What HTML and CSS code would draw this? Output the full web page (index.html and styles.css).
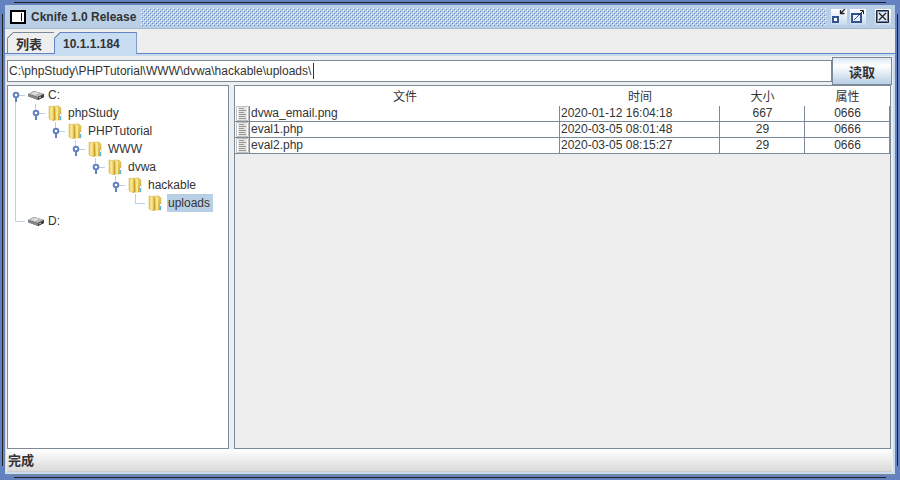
FILE: index.html
```html
<!DOCTYPE html>
<html lang="zh-CN">
<head>
    <meta charset="UTF-8">
    <meta name="viewport" content="width=device-width, initial-scale=1.0">
    <title>Cknife 1.0 Release</title>
    <link rel="stylesheet" href="styles.css">
</head>
<body>
    <!-- Shared icons -->
    <svg class="sprite" aria-hidden="true">
        <defs>
            <linearGradient id="gold" x1="0" x2="1" y1="0" y2="1">
                <stop offset="0" stop-color="#f6e48c"/>
                <stop offset="1" stop-color="#cfa62e"/>
            </linearGradient>
            <linearGradient id="gold-light" x1="0" x2="1">
                <stop offset="0" stop-color="#e2bd48"/>
                <stop offset="0.4" stop-color="#fbeea0"/>
                <stop offset="1" stop-color="#e6c658"/>
            </linearGradient>
        </defs>
        <symbol id="handle-root" viewBox="0 0 20 18">
            <path d="M11 9.500h6" stroke="#b8cfe5"/>
            <path d="M8 11v5" stroke="#6382bf" stroke-width="2"/>
            <circle cx="8" cy="9" r="2.300" fill="#fff" stroke="#6382bf" stroke-width="2"/>
        </symbol>
        <symbol id="handle" viewBox="0 0 20 18">
            <path d="M7.500 0v7M11 9.500h6" stroke="#b8cfe5"/>
            <path d="M8 11v5" stroke="#6382bf" stroke-width="2"/>
            <circle cx="8" cy="9" r="2.300" fill="#fff" stroke="#6382bf" stroke-width="2"/>
        </symbol>
        <symbol id="elbow" viewBox="0 0 20 18">
            <path d="M7.500 0v9.500h9.500" fill="none" stroke="#b8cfe5"/>
        </symbol>
        <symbol id="drive" viewBox="0 0 16 16">
            <path d="M0 7l6-3 10 3v3l-6 3L0 9z" fill="#555"/>
            <path d="M0 7l6-3 10 3-6 3z" fill="#b9b9b9"/>
            <path d="M3 6.500l4-1.500 4 1-4 2z" fill="#e4e4e4"/>
            <path d="M0 7l10 3v3L0 9.500z" fill="#858585"/>
            <path d="M10 10l6-3v3l-6 3z" fill="#3d3d3d"/>
            <path d="M11 11l2-1" stroke="#ddd"/>
        </symbol>
        <symbol id="folder" viewBox="0 0 16 16">
            <path d="M5 1h6l2 2v12H5z" fill="url(#gold)" stroke="#d8b64c" stroke-width="0.500"/>
            <path d="M1 1l5 1v14l-5-2z" fill="url(#gold-light)" stroke="#d3ac3b" stroke-width="0.500"/>
            <path d="M6 3l1-1v13l-1 1z" fill="#c99f2c"/>
            <path d="M8 2h2v13H8z" fill="#f8e68e"/>
            <path d="M12.500 11v4" stroke="#5bb5dd"/>
            <path d="M12.500 9v2" stroke="#fff"/>
        </symbol>
        <symbol id="file" viewBox="0 0 13 15">
            <path d="M0.500 0.500h12v14h-12z" fill="#fff" stroke="#c0c0c0"/>
            <path d="M2 1h9v13H2z" fill="#e6e6e6"/>
            <path d="M3 2.500h5M3 4.500h7M3 6.500h5M3 8.500h7M3 10.500h6M3 12.500h7" stroke="#969696"/>
        </symbol>
    </svg>

    <div class="window">
        <header class="titlebar">
            <svg class="app-icon" viewBox="0 0 16 14">
                <path d="M1 1h14v12H1z" fill="#fff" stroke="#000" stroke-width="2"/>
                <path d="M11.500 3v8" stroke="#000"/>
            </svg>
            <h1 class="title">Cknife 1.0 Release</h1>
            <div class="grip"></div>
            <div class="window-buttons">
                <button class="window-button" aria-label="Minimize">
                    <svg viewBox="0 0 16 16">
                        <path d="M2 8h5v5H2z" fill="#fff" stroke="#33538f" stroke-width="2"/>
                        <path d="M14 0l-4 4M9.500 1v3.500h4" fill="none" stroke="#222" stroke-width="1.300"/>
                    </svg>
                </button>
                <button class="window-button" aria-label="Maximize">
                    <svg viewBox="0 0 16 16">
                        <path d="M2 5h9v8H2z" fill="#eef4fa" stroke="#33538f" stroke-width="2"/>
                        <path d="M4 11l5-5" stroke="#33538f"/>
                        <path d="M9 6l4-4M10 1.500h3.500V5" fill="none" stroke="#222"/>
                    </svg>
                </button>
                <button class="window-button close" aria-label="Close">
                    <svg viewBox="0 0 16 16">
                        <path d="M1.500 1.500h12v12h-12z" fill="#dce8f5" stroke="#222"/>
                        <path d="M2.500 2.500h10v10h-10z" fill="none" stroke="#6382bf"/>
                        <path d="M4 4l7 7M11 4l-7 7" stroke="#222" stroke-width="1.300"/>
                    </svg>
                </button>
            </div>
        </header>

        <nav class="tabs">
            <button class="tab">列表</button>
            <button class="tab active">10.1.1.184</button>
        </nav>

        <main class="pane">
            <div class="path-row">
                <input class="path" type="text" aria-label="路径" value="C:\phpStudy\PHPTutorial\WWW\dvwa\hackable\uploads\">
                <button class="read">读取</button>
            </div>

            <div class="split">
                <ul class="tree">
                    <li class="drive">
                        <div class="node"><svg class="handle"><use href="#handle-root"/></svg><svg class="icon"><use href="#drive"/></svg><span class="label">C:</span></div>
                        <ul>
                            <li>
                                <div class="node"><svg class="handle"><use href="#handle"/></svg><svg class="icon"><use href="#folder"/></svg><span class="label">phpStudy</span></div>
                                <ul>
                                    <li>
                                        <div class="node"><svg class="handle"><use href="#handle"/></svg><svg class="icon"><use href="#folder"/></svg><span class="label">PHPTutorial</span></div>
                                        <ul>
                                            <li>
                                                <div class="node"><svg class="handle"><use href="#handle"/></svg><svg class="icon"><use href="#folder"/></svg><span class="label">WWW</span></div>
                                                <ul>
                                                    <li>
                                                        <div class="node"><svg class="handle"><use href="#handle"/></svg><svg class="icon"><use href="#folder"/></svg><span class="label">dvwa</span></div>
                                                        <ul>
                                                            <li>
                                                                <div class="node"><svg class="handle"><use href="#handle"/></svg><svg class="icon"><use href="#folder"/></svg><span class="label">hackable</span></div>
                                                                <ul>
                                                                    <li>
                                                                        <div class="node"><svg class="handle"><use href="#elbow"/></svg><svg class="icon"><use href="#folder"/></svg><span class="label selected">uploads</span></div>
                                                                    </li>
                                                                </ul>
                                                            </li>
                                                        </ul>
                                                    </li>
                                                </ul>
                                            </li>
                                        </ul>
                                    </li>
                                </ul>
                            </li>
                        </ul>
                    </li>
                    <li>
                        <div class="node"><svg class="handle"><use href="#elbow"/></svg><svg class="icon"><use href="#drive"/></svg><span class="label">D:</span></div>
                    </li>
                </ul>

                <div class="files">
                    <table>
                        <colgroup>
                            <col class="col-icon">
                            <col>
                            <col class="col-time">
                            <col class="col-size">
                            <col class="col-attr">
                        </colgroup>
                        <thead>
                            <tr><th></th><th>文件</th><th>时间</th><th>大小</th><th>属性</th></tr>
                        </thead>
                        <tbody>
                            <tr>
                                <td><svg class="file-icon"><use href="#file"/></svg></td>
                                <td>dvwa_email.png</td>
                                <td>2020-01-12 16:04:18</td>
                                <td class="center">667</td>
                                <td class="center">0666</td>
                            </tr>
                            <tr>
                                <td><svg class="file-icon"><use href="#file"/></svg></td>
                                <td>eval1.php</td>
                                <td>2020-03-05 08:01:48</td>
                                <td class="center">29</td>
                                <td class="center">0666</td>
                            </tr>
                            <tr>
                                <td><svg class="file-icon"><use href="#file"/></svg></td>
                                <td>eval2.php</td>
                                <td>2020-03-05 08:15:27</td>
                                <td class="center">29</td>
                                <td class="center">0666</td>
                            </tr>
                        </tbody>
                    </table>
                </div>
            </div>

            <footer class="status">完成</footer>
        </main>
    </div>
</body>
</html>
```
FILE: styles.css
```css
* {
    margin: 0;
    padding: 0;
    box-sizing: border-box;
}

body, button, input {
    font-family: "Liberation Sans", "Noto Sans CJK SC", sans-serif;
    font-size: 12px;
    color: #333;
}

.sprite {
    position: absolute;
    width: 0;
    height: 0;
}

/* Window frame */
.window {
    display: flex;
    flex-direction: column;
    min-height: 100vh;
    padding: 5px;
    background-color: #6382bf;
    background-image:
        linear-gradient(#222, #222),
        linear-gradient(#222, #222),
        linear-gradient(#222, #222),
        linear-gradient(#222, #222);
    background-repeat: no-repeat;
    background-position: center top 2px, center bottom 2px, left 2px center, right 2px center;
    background-size: calc(100% - 28px) 1px, calc(100% - 28px) 1px, 1px calc(100% - 28px), 1px calc(100% - 28px);
}

.titlebar {
    display: flex;
    align-items: center;
    height: 24px;
    padding: 0 4px 0 5px;
    background-color: #b8cfe5;
    border-bottom: 1px solid #a3b8cc;
}

.app-icon {
    width: 16px;
    height: 14px;
    margin-right: 5px;
}

.title {
    font-size: 12px;
    font-weight: bold;
}

.grip {
    flex: 1;
    height: 18px;
    margin: 0 5px;
    background-image:
        conic-gradient(at 1px 1px, transparent 75%, #6382bf 0),
        conic-gradient(at 1px 1px, transparent 75%, #6382bf 0),
        conic-gradient(at 1px 1px, transparent 75%, #fff 0),
        conic-gradient(at 1px 1px, transparent 75%, #fff 0);
    background-position: 1px 1px, 3px 3px, 0 0, 2px 2px;
    background-size: 4px 4px;
}

.window-buttons {
    display: flex;
    gap: 3px;
}

.window-button {
    width: 16px;
    height: 16px;
    border: none;
    background-image: linear-gradient(#fff, #c8dbee);
}

.window-button.close {
    margin-left: 6px;
}

.window-button svg {
    display: block;
    width: 16px;
    height: 16px;
}

/* Tabs */
.tabs {
    display: flex;
    height: 24px;
    padding: 3px 2px 0;
    background-color: #eee;
}

.tab {
    padding: 0 12px 0 8px;
    font-size: 13px;
    font-weight: bold;
    border: 1px solid #7a8a99;
    border-right: none;
    border-bottom: none;
    background-color: #eee;
    background-image: linear-gradient(135deg, transparent 4px, #7a8a99 4px, #7a8a99 5px, transparent 5px);
    background-origin: border-box;
    clip-path: polygon(6px 0, 100% 0, 100% 100%, 0 100%, 0 6px);
}

.tab.active {
    position: relative;
    margin-bottom: -1px;
    padding: 0 16px 0 8px;
    font-size: 12px;
    border-color: #6382bf;
    border-right: 1px solid #6382bf;
    background-color: #c8ddf2;
    background-image: linear-gradient(135deg, transparent 4px, #6382bf 4px, #6382bf 5px, transparent 5px);
}

/* Tab content */
.pane {
    flex: 1;
    display: flex;
    flex-direction: column;
    padding: 3px 3px 2px 2px;
    border-top: 1px solid #6382bf;
    border-bottom: 1px solid #7a8a99;
    background-color: #eee;
    box-shadow: inset 0 2px #c8ddf2, inset -2px -2px #c8ddf2, inset 1px 0 #c8ddf2;
}

.path-row {
    display: flex;
    align-items: center;
}

.path {
    flex: 1;
    min-width: 0;
    height: 22px;
    padding: 0 1px;
    border: 1px solid #7a8a99;
    /* text cursor after the path */
    background: #fff linear-gradient(#333, #333) no-repeat 305px 2px / 1px 16px;
    outline: none;
}

.read {
    width: 60px;
    height: 28px;
    font-size: 13px;
    font-weight: bold;
    border: 1px solid #7a8a99;
    background-image: linear-gradient(#dde8f3, #fff 30%, #b8cfe5);
}

.split {
    flex: 1;
    display: flex;
    gap: 5px;
    padding-right: 1px;
}

/* Directory tree */
.tree {
    width: 222px;
    border: 1px solid #7a8a99;
    background-color: #fff;
}

.tree ul {
    padding-left: 20px;
}

.tree li {
    list-style: none;
}

.tree .drive {
    background: linear-gradient(#b8cfe5, #b8cfe5) no-repeat 7px 15px / 1px 100%;
}

.node {
    display: flex;
    align-items: center;
    height: 18px;
}

.handle {
    width: 20px;
    height: 18px;
}

.icon {
    width: 16px;
    height: 16px;
    margin-right: 3px;
}

.label {
    padding: 0 3px 0 1px;
    line-height: 18px;
}

.label.selected {
    background-color: #b8cfe5;
}

/* File list */
.files {
    flex: 1;
    border: 1px solid #7a8a99;
}

table {
    width: 100%;
    table-layout: fixed;
    border-collapse: separate;
    border-spacing: 0;
    background-color: #fff;
}

.col-icon {
    width: 15px;
}

.col-time {
    width: 160px;
}

.col-size, .col-attr {
    width: 85px;
}

th {
    height: 20px;
    padding-top: 2px;
    font-weight: normal;
    line-height: 18px;
}

td {
    height: 16px;
    padding-left: 1px;
    line-height: 15px;
    border-right: 1px solid #7a8a99;
    border-bottom: 1px solid #7a8a99;
}

.center {
    text-align: center;
}

.file-icon {
    display: block;
    width: 13px;
    height: 15px;
}

/* Status bar */
.status {
    height: 23px;
    padding-left: 1px;
    font-size: 13px;
    font-weight: bold;
    line-height: 24px;
    border-bottom: 1px solid #ccc;
    background-image: linear-gradient(#fff, #dadada);
}
```
